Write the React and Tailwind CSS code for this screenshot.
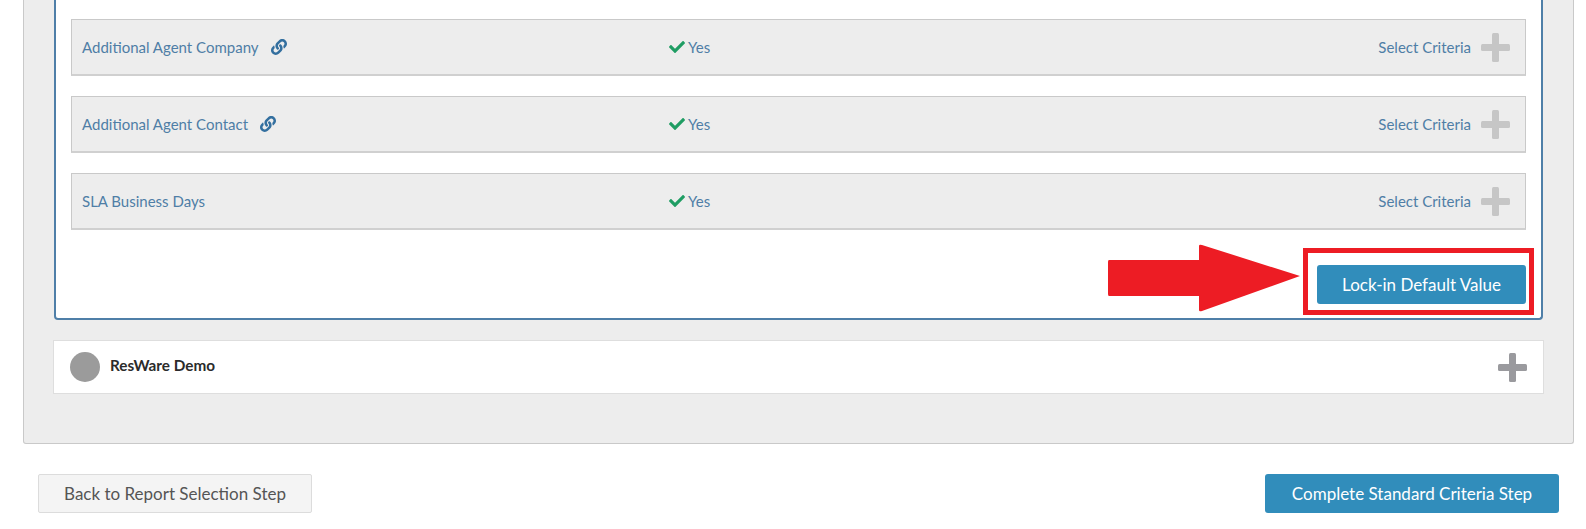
import React from "react";
import { FaCheck, FaLink } from "react-icons/fa";

function Plus({ className }) {
  return (
    <svg className={className} viewBox="0 0 29 29" fill="currentColor">
      <rect x="0" y="11" width="29" height="7" rx="1.5" />
      <rect x="11" y="0" width="7" height="29" rx="1.5" />
    </svg>
  );
}

function Row({ label, link }) {
  return (
    <div className="flex items-center h-[57px] mb-5 bg-[#ededed] border border-[#c9c9c9] border-b-2 border-b-[#d0d0d0] pl-[10px] pr-[15px] text-[15px] text-[#4f7ea6]">
      <div className="w-[587px] flex items-center shrink-0">
        <span>{label}</span>
        {link && <FaLink className="ml-3 w-4 h-4 text-[#336f9f]" />}
      </div>
      <div className="flex items-center">
        <FaCheck className="w-4 h-4 mr-[3px] text-[#1f9d63]" />
        <span>Yes</span>
      </div>
      <div className="ml-auto flex items-center">
        <span>Select Criteria</span>
        <Plus className="ml-[10px] w-[29px] h-[29px] text-[#c6c6c6]" />
      </div>
    </div>
  );
}

export default function App() {
  return (
    <div className="relative w-[1586px] h-[529px] overflow-hidden bg-white font-['Lato','Noto_Sans',sans-serif]">
      <div className="ml-[23px] w-[1551px] h-[444px] bg-[#ededed] border border-t-0 border-[#c9c9c9] rounded-b-[3px] pl-[29px] pr-[29px]">
        <div className="ml-[1px] h-[320px] w-[1489px] bg-white border-2 border-t-0 border-[#4f7fa8] rounded-b-[4px] pt-[19px] pl-[15px] pr-[15px]">
          <Row label="Additional Agent Company" link />
          <Row label="Additional Agent Contact" link />
          <Row label="SLA Business Days" />
          <div className="flex justify-end pt-[15px]">
            <button className="w-[209px] h-[39px] bg-[#318dbb] rounded-[3px] text-white text-[17px]">Lock-in Default Value</button>
          </div>
        </div>
        <div className="mt-5 h-[54px] w-[1491px] bg-white border border-[#dedede] flex items-center pl-4 pr-4">
          <div className="w-[30px] h-[30px] rounded-full bg-[#9b9b9b]" />
          <span className="ml-[10px] pb-1 text-[15.3px] font-bold text-[#2b2b2b]">ResWare Demo</span>
          <Plus className="ml-auto w-[29px] h-[29px] text-[#9a9a9e]" />
        </div>
      </div>
      <div className="flex justify-between mt-[30px] ml-[38px] mr-[27px] items-start">
        <button className="w-[274px] h-[39px] bg-[#f4f4f4] border border-[#dcdcdc] rounded-[2px] text-[#555] text-[17px]">Back to Report Selection Step</button>
        <button className="w-[294px] h-[39px] bg-[#318dbb] rounded-[3px] text-white text-[17px]">Complete Standard Criteria Step</button>
      </div>
      <div className="absolute left-[1303px] top-[248px] w-[231px] h-[67px] border-[5px] border-[#ed1c24]" />
      <svg className="absolute left-[1105px] top-[240px]" width="200" height="76" viewBox="0 0 200 76">
        <path d="M4 20 H94 V6 Q94 4 97 5 L195 36 L97 71 Q94 72 94 70 V56 H4 Q3 56 3 54 V22 Q3 20 4 20 Z" fill="#ed1c24" />
      </svg>
    </div>
  );
}
